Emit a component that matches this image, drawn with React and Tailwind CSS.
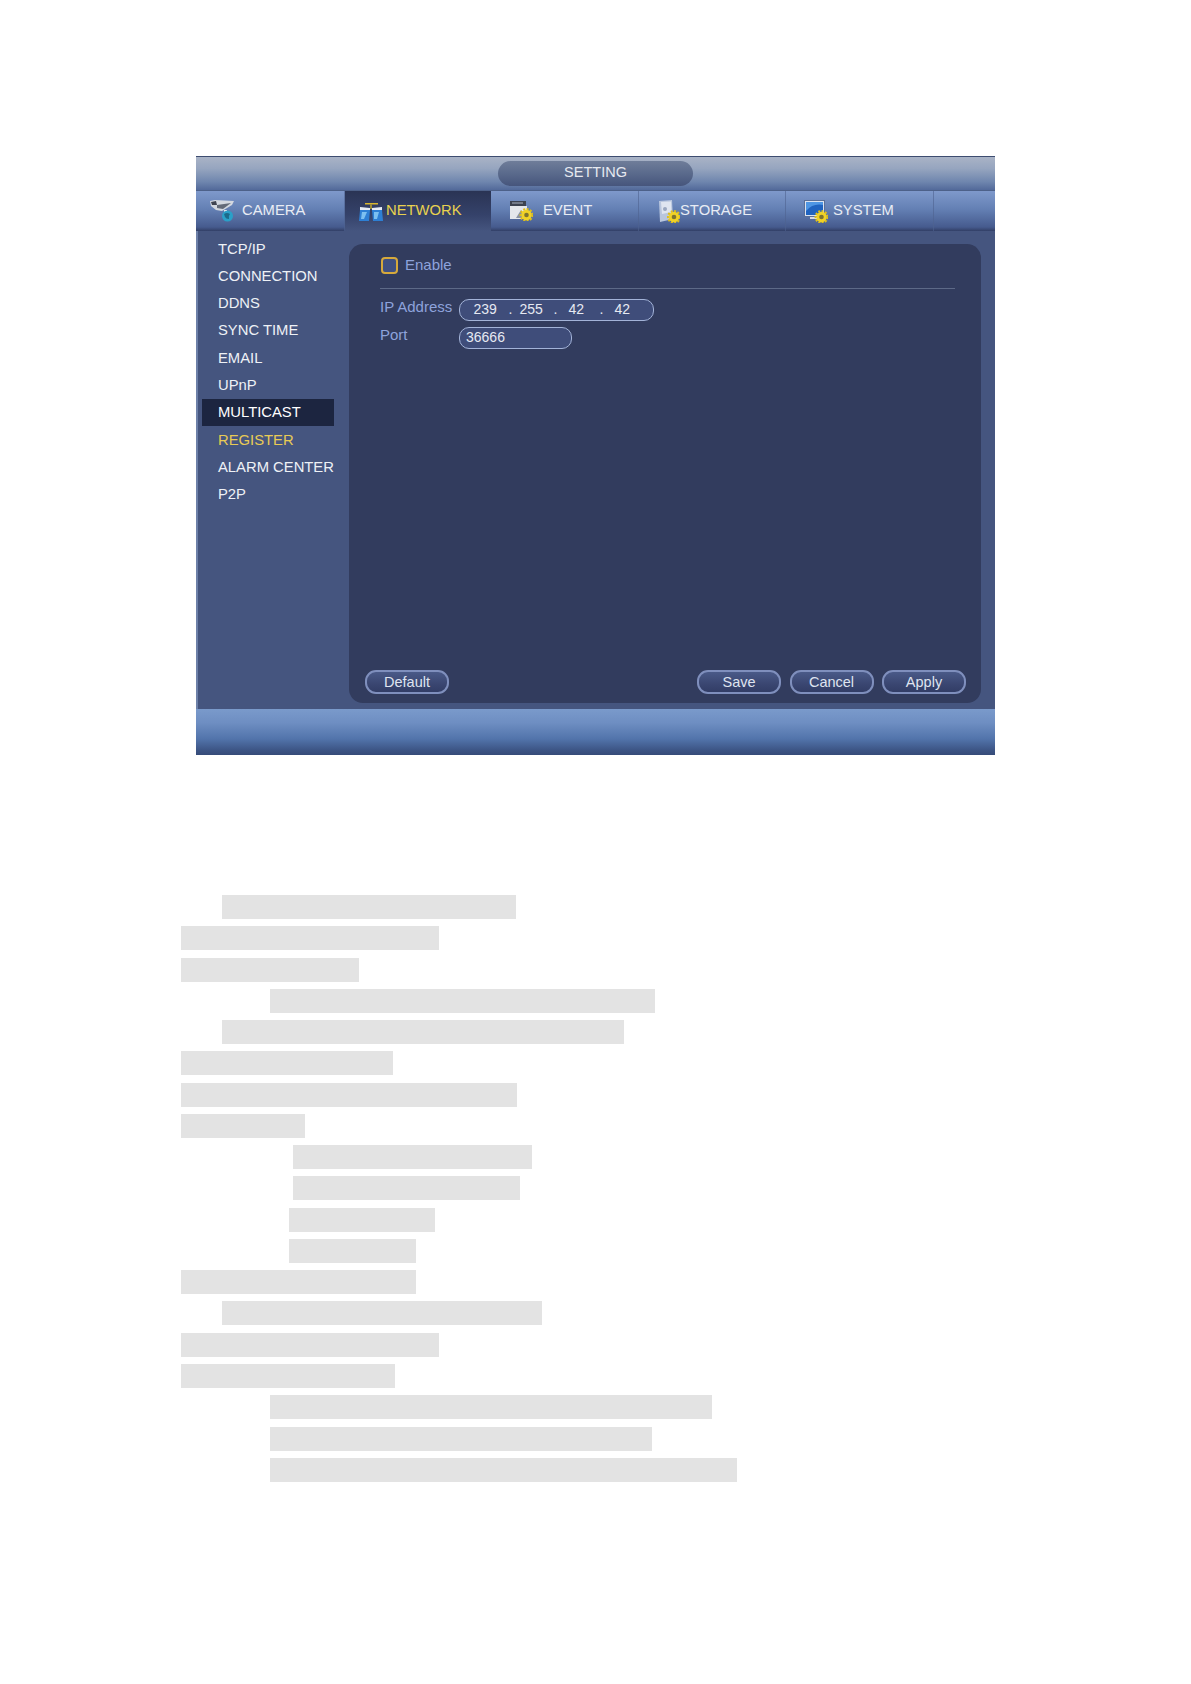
import React from 'react';

const Gear = ({ cx, cy, r = 5.5 }) => (
  <g>
    <circle cx={cx} cy={cy} r={r + 0.4} fill="none" stroke="#e0bf18" strokeWidth="2.2" strokeDasharray="2 1.4" />
    <circle cx={cx} cy={cy} r={r - 0.3} fill="#f0d226" />
    <circle cx={cx} cy={cy} r={r - 3.2} fill="#7d7430" />
  </g>
);

const CameraIcon = () => (
  <svg width="24" height="22" viewBox="0 0 24 22" className="shrink-0">
    <path d="M0 1 L5 0 L24 1 L22 5 L12 11 L6 10 L1 6 Z" fill="#d3d8e0" />
    <path d="M1 2 L6 1 L7 5 L2 5 Z" fill="#3f4451" />
    <path d="M7 5 L21 3 L13 9 L7 8 Z" fill="#636a78" />
    <path d="M14 10 L17 10 L17 14 L14 14 Z" fill="#e5e7eb" />
    <circle cx="17.5" cy="16" r="5.5" fill="#2aa0c8" />
    <path d="M14 14 Q17 12 20 14 Q18 16 19 19 Q16 19 15 17 Z" fill="#1c6a8a" />
  </svg>
);

const NetworkIcon = () => (
  <svg width="24" height="22" viewBox="0 -3 24 22" className="shrink-0">
    <path d="M6 0 L19 0 L19 1.5 L6 1.5 Z" fill="#d8b62e" />
    <path d="M11 1 L13 1 L13 6 L11 6 Z" fill="#9a8a3a" />
    <path d="M1 4 L11 5 L11 7 L1 7 Z" fill="#e8edf5" />
    <path d="M13 5 L23 4 L23 7 L13 7 Z" fill="#e8edf5" />
    <path d="M1 7 L11 7 L10 18 L0 18 Z" fill="#2d7fd4" />
    <path d="M13 7 L23 7 L24 18 L14 18 Z" fill="#2d7fd4" />
    <path d="M3 9 L8 9 L5 16 L2 16 Z" fill="#7cc0f0" />
    <path d="M15 9 L20 9 L18 16 L15 16 Z" fill="#7cc0f0" />
  </svg>
);

const EventIcon = () => (
  <svg width="24" height="20" viewBox="0 0 24 20" className="shrink-0">
    <rect x="1" y="0" width="16" height="5" fill="#3c4250" />
    <rect x="1" y="5" width="17" height="13" fill="#e4e7ec" />
    <rect x="3" y="1.5" width="11" height="1" fill="#aab1bf" />
    <path d="M7 17 L12 9 L14 13 L13 17 Z" fill="#8b93a3" />
    <Gear cx="17.5" cy="14" />
  </svg>
);

const StorageIcon = () => (
  <svg width="22" height="23" viewBox="0 0 22 23" className="shrink-0">
    <path d="M1 1 L14 0 L15 19 L2 22 Z" fill="#b9c6de" />
    <path d="M3 2 L13 1.5 L13.5 12 L4 14 Z" fill="#dfe5f0" />
    <circle cx="7" cy="9" r="2" fill="#9aa7c0" />
    <Gear cx="16" cy="17" />
  </svg>
);

const SystemIcon = () => (
  <svg width="24" height="23" viewBox="0 0 24 23" className="shrink-0">
    <rect x="0.5" y="0.5" width="20" height="16" fill="#dbe3f0" stroke="#5b6f96" />
    <rect x="2" y="2" width="17" height="13" fill="#1f63c0" />
    <path d="M2 11 Q9 3 19 5 L19 2 L2 2 Z" fill="#4e96e4" />
    <rect x="6" y="17" width="9" height="2" fill="#d5dbe6" />
    <Gear cx="17.5" cy="17" />
  </svg>
);

const tabs = [
  { label: 'CAMERA', cls: 'w-[149px] pl-[14px] gap-[8px]', icon: <CameraIcon /> },
  { label: 'NETWORK', cls: 'w-[146px] pl-[14px] gap-[3px]', icon: <NetworkIcon />, active: true },
  { label: 'EVENT', cls: 'w-[148px] pl-[18px] gap-[10px]', icon: <EventIcon /> },
  { label: 'STORAGE', cls: 'w-[147px] pl-[19px] gap-0', icon: <StorageIcon /> },
  { label: 'SYSTEM', cls: 'w-[148px] pl-[18px] gap-[5px]', icon: <SystemIcon /> },
];

const menu = ['TCP/IP', 'CONNECTION', 'DDNS', 'SYNC TIME', 'EMAIL', 'UPnP', 'MULTICAST', 'REGISTER', 'ALARM CENTER', 'P2P'];

const bars = [
  'ml-[41px] w-[294px]',
  'ml-0 w-[258px]',
  'ml-0 w-[178px]',
  'ml-[89px] w-[385px]',
  'ml-[41px] w-[402px]',
  'ml-0 w-[212px]',
  'ml-0 w-[336px]',
  'ml-0 w-[124px]',
  'ml-[112px] w-[239px]',
  'ml-[112px] w-[227px]',
  'ml-[108px] w-[146px]',
  'ml-[108px] w-[127px]',
  'ml-0 w-[235px]',
  'ml-[41px] w-[320px]',
  'ml-0 w-[258px]',
  'ml-0 w-[214px]',
  'ml-[89px] w-[442px]',
  'ml-[89px] w-[382px]',
  'ml-[89px] w-[467px]',
];

const Btn = ({ children }) => (
  <button className="w-[84px] h-[24px] rounded-[11px] border-2 border-[#7f8fbd] bg-[linear-gradient(180deg,#4a5a88_0%,#3a4671_60%,#323d66_100%)] text-[14.5px] leading-none text-[#dfe4f0]">
    {children}
  </button>
);

export default function App() {
  return (
    <div className="min-h-[1684px] bg-white font-['Liberation_Sans',Arial,sans-serif] overflow-hidden">
      <div className="ml-[196px] pt-[156px] w-[799px]">
        {/* title */}
        <div className="h-[34px] flex justify-center items-start pt-[4px] border-t border-[#3d4c70] bg-[linear-gradient(180deg,#a9b3c6_0%,#96a5bf_35%,#6f86ae_75%,#52699a_100%)]">
          <div className="w-[195px] h-[25px] rounded-full bg-[linear-gradient(180deg,#6f7d99_0%,#5a6a8c_50%,#46557c_100%)] text-center text-[14.5px] leading-[23px] text-[#e6e9f0]">
            SETTING
          </div>
        </div>

        {/* tabs */}
        <div className="h-[41px] flex border-t border-[#4d6189] bg-[linear-gradient(180deg,#7f99cb_0%,#6480b4_45%,#465b8e_90%,#323f66_100%)]">
          {tabs.map((t) => (
            <div
              key={t.label}
              className={`${t.cls} flex items-center text-[14.8px] ${
                t.active
                  ? 'bg-[linear-gradient(180deg,#2a3454_0%,#35426a_60%,#45557f_100%)] text-[#e8d24f]'
                  : 'border-r border-[#4f6390]/60 text-[#e8ecf4]'
              }`}
            >
              {t.icon}
              <span className="-mt-[1px]">{t.label}</span>
            </div>
          ))}
        </div>

        {/* body */}
        <div className="h-[478px] flex border-l-2 border-[#6d80a8] bg-[#45557f]">
          <div className="w-[151px] shrink-0 pt-[4px] pl-[4px]">
            {menu.map((m) => (
              <div
                key={m}
                className={`h-[27.3px] w-[132px] pl-[16px] flex items-center whitespace-nowrap text-[14.8px] ${
                  m === 'MULTICAST'
                    ? 'bg-[#1c2540] text-white'
                    : m === 'REGISTER'
                      ? 'text-[#e8cb55]'
                      : 'text-[#eef1f6]'
                }`}
              >
                {m}
              </div>
            ))}
          </div>

          <div className="mt-[13px] mb-[6px] w-[632px] rounded-[14px] bg-[#323c5e] pl-[31px] pr-[26px] pt-[13px] pb-[9px] flex flex-col">
            <div className="flex items-center gap-[7px] h-[17px]">
              <div className="ml-[1px] w-[17px] h-[17px] rounded-[4px] border-2 border-[#d6a93c] bg-[#3f5082]" />
              <span className="text-[15px] text-[#8ea3dc]">Enable</span>
            </div>
            <div className="mt-[14px] h-px bg-[#5d6987]" />

            <div className="mt-[10px] flex items-center h-[22px] text-[15px] text-[#8ea3dc]">
              <span className="w-[79px] pb-[6px]">IP Address</span>
              <div className="w-[195px] h-[22px] pb-[2px] rounded-[10px] border-[1.5px] border-[#a3b3d8] bg-[#3f4d7a] flex items-center pl-[13.5px] text-[14px] text-[#e6e9f2]">
                <span className="w-[35px]">239</span>
                <span className="w-[11px]">.</span>
                <span className="w-[34px]">255</span>
                <span className="w-[15px]">.</span>
                <span className="w-[31px]">42</span>
                <span className="w-[15px]">.</span>
                <span>42</span>
              </div>
            </div>

            <div className="mt-[6px] flex items-center h-[22px] text-[15px] text-[#8ea3dc]">
              <span className="w-[79px] pb-[6px]">Port</span>
              <div className="w-[113px] h-[22px] pb-[2px] rounded-[10px] border-[1.5px] border-[#a3b3d8] bg-[#3f4d7a] flex items-center pl-[6px] text-[14px] text-[#e6e9f2]">
                36666
              </div>
            </div>

            <div className="mt-auto flex justify-between -ml-[15px] -mr-[11px]">
              <Btn>Default</Btn>
              <div className="flex gap-[8.5px]">
                <Btn>Save</Btn>
                <Btn>Cancel</Btn>
                <Btn>Apply</Btn>
              </div>
            </div>
          </div>
        </div>

        {/* footer */}
        <div className="h-[46px] bg-[linear-gradient(180deg,#7a9acb_0%,#6e8ec2_30%,#5274ab_65%,#3c5484_90%,#364b78_100%)]" />
      </div>

      {/* redacted text lines */}
      <div className="mt-[140px] pl-[181px] flex flex-col gap-[7.28px]">
        {bars.map((b, i) => (
          <div key={i} className={`${b} h-[24px] bg-[#e3e3e3]`} />
        ))}
      </div>
    </div>
  );
}
